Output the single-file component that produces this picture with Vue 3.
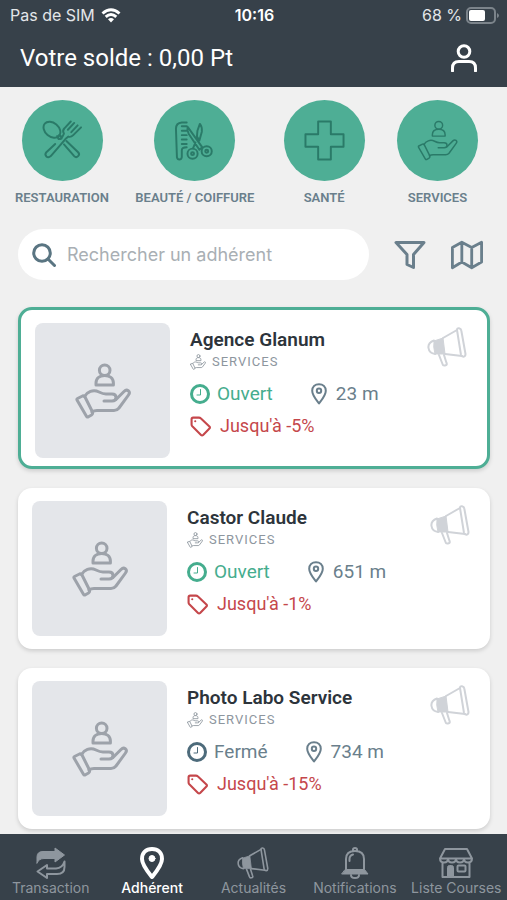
<script setup>
import { ref } from 'vue'

const search = ref('')

const categories = [
  { label: 'RESTAURATION', icon: 'cutlery' },
  { label: 'BEAUTÉ / COIFFURE', icon: 'hair' },
  { label: 'SANTÉ', icon: 'cross' },
  { label: 'SERVICES', icon: 'service' },
]

const members = [
  { name: 'Agence Glanum', open: true, distance: '23 m', offer: "Jusqu'à -5%", featured: true },
  { name: 'Castor Claude', open: true, distance: '651 m', offer: "Jusqu'à -1%", featured: false },
  { name: 'Photo Labo Service', open: false, distance: '734 m', offer: "Jusqu'à -15%", featured: false },
]

const tabs = [
  { label: 'Transaction', icon: 'transfer' },
  { label: 'Adhérent', icon: 'place' },
  { label: 'Actualités', icon: 'megaphone' },
  { label: 'Notifications', icon: 'bell' },
  { label: 'Liste Courses', icon: 'shop' },
]
const activeTab = ref('Adhérent')
</script>

<template>
  <svg class="sprite" aria-hidden="true">
    <symbol id="service" viewBox="0 0 56 56">
      <circle cx="29.7" cy="7.3" r="5.3" />
      <path d="M21 22v-2c0-5 4-7.5 8.7-7.5s8.7 2.5 8.7 7.5v2z" />
      <path d="M2.5 35.5 7.5 33Q9 32.5 10 34L17.5 49Q18 51 16.5 52L13 54Q12 54.3 11.3 53L2 37Q1.6 36 2.5 35.5z" />
      <path d="M9.5 33.5C12 29 18 26 24 29C27 30.500 28 31 31 31H37Q41 31 41 34.5Q41 38 37 38H29" />
      <path d="M41 36.500 49 28.500C52 25.500 56 28.500 53.5 32L44 45Q42 47.5 39 47.5H22Q19 47.5 17 49" />
    </symbol>
    <symbol id="cutlery" viewBox="0 0 42 42">
      <ellipse cx="10.2" cy="10" rx="9.6" ry="7" transform="rotate(40 10.2 10)" />
      <path d="M15.500 16.500l1.5 3 3-.5M17.5 15.500l2.500 1.500v2M22.500 25 33 37q2 2 4 0t0-4L25 21.500" />
      <path d="M29.500 1.500 23 8.500Q20.500 11 22.500 14L21 17 18.500 19.500M13.500 24.500 4.500 33q-2 2.500 0 4.300t4.500-.3L24 19.500l3-2.500q2.500 1 5-1.500l8-8M33 3l-6.500 7M36.500 5.500 30 12.500" />
    </symbol>
    <symbol id="hair" viewBox="0 0 42 42">
      <path d="M13 2.500H8Q2 3 2 9L3 38q.5 2.500 2.500 2.500T8 38V31q0-3 5-3" />
      <path d="M8 6.500h5M8 11h5M8 15.500h5M8 20h5M8 24.500h5" />
      <path d="M14 7 29 28 26 30.500 15 14Q13 10 14 7zM26.500 4Q29 7 28.500 12L26 21 23.500 17 24 11zM22 23l-2.500 6" />
      <circle cx="19" cy="34.500" r="5.200" /><circle cx="33.500" cy="32" r="5.200" />
      <circle cx="19" cy="34.500" r="1.500" /><circle cx="33.500" cy="32" r="1.500" />
    </symbol>
    <symbol id="cross" viewBox="0 0 42 42">
      <path d="M14.500 1.500h13v13h13v13h-13v13h-13v-13h-13v-13h13z" />
    </symbol>
    <symbol id="megaphone" viewBox="0 0 40 40">
      <path d="M7 13.500C3 15 1 18 1.500 21C2 25 4.500 26.500 8 27" />
      <path class="solid" d="M7 14 16 11 18 27H8Q6 20 7 14z" />
      <path d="M16 11 30 3M18 27 35 29" />
      <path d="M30 3Q30 1 32 1.200 34 1.500 34.300 3.500L38.500 27Q38.500 29.500 36.500 29.700 34.500 29.500 34 28z" />
      <path d="M12 28 15.500 37Q16 39 18 38.500 20.500 38 19.500 36L17 28" />
    </symbol>
    <symbol id="transfer" viewBox="0 0 30 32">
      <path class="solid" d="M1 16V10Q1 4.500 7 4.500H19V1L28.500 8 19 15V11.500H8Q3 11.500 1 16z" />
      <path d="M28.500 14.500V20Q28.500 27 21 27H11V31L1.500 24.500 11 18V21.500H20Q26.500 21 28.500 14.500z" />
    </symbol>
    <symbol id="place" viewBox="0 0 24 32">
      <path d="M12 2C6 2 2 6 2 12 2 18 8 25 12 30 16 25 22 18 22 12 22 6 18 2 12 2z" />
      <circle class="dot" cx="12" cy="11.500" r="3" />
    </symbol>
    <symbol id="bell" viewBox="0 0 28 32">
      <path d="M5 22V12Q5 4 14 4T23 12V22M12 4V2.500Q12 1 14 1T16 2.500V4M10 28q0 3 4 3t4-3" />
      <path d="M8.500 14V12Q8.500 8.500 12 7.500" />
      <path class="solid" d="M4.500 22.500H23.500L27 27H1z" />
    </symbol>
    <symbol id="shop" viewBox="0 0 34 31">
      <path d="M6 1.500H28L33 11H1zM1 11q0 4 4 4t4-4q0 4 4 4t4-4q0 4 4 4t4-4q0 4 4 4t4-4M3.500 15V29.500H30.500V15" />
      <path class="solid" d="M8.500 29V20q0-2 2-2h2q2 0 2 2v9z" />
      <rect x="18.500" y="18" width="8" height="6" rx="1" />
    </symbol>
    <symbol id="clock" viewBox="0 0 20 20">
      <circle cx="10" cy="10" r="8.500" />
      <path class="thin" d="M10.500 5.500V11H7" />
    </symbol>
    <symbol id="tag" viewBox="0 0 20 20">
      <path d="M1.500 3Q1.500 1.500 3 1.500H8.500Q9.500 1.500 10.200 2.200L18.500 10Q19.500 11 18.500 12L12.500 18Q11.500 19 10.500 18L2.200 9.800Q1.500 9 1.500 8z" />
      <circle class="dot" cx="5" cy="5" r="0.500" />
    </symbol>
    <symbol id="pin" viewBox="0 0 16 22">
      <path d="M8 1.200C4 1.200 1.200 4 1.200 7.800 1.200 12.500 5.500 17 8 20.500 10.500 17 14.800 12.500 14.800 7.800 14.800 4 12 1.200 8 1.200z" />
      <circle cx="8" cy="7.800" r="2.200" />
    </symbol>
  </svg>

  <div class="app">
    <header class="header">
      <div class="status">
        <span class="carrier">
          Pas de SIM
          <svg class="wifi" viewBox="0 0 20 15" aria-hidden="true">
            <path d="M1.500 5.500Q10-2 18.500 5.500M4.700 8.800Q10 4.200 15.300 8.800" />
            <path class="wifi-base" d="M7 11.300Q10 8.700 13 11.300L10 14.500z" />
          </svg>
        </span>
        <strong class="time">10:16</strong>
        <span class="battery">
          68 %
          <svg class="cell" viewBox="0 0 33 17" aria-hidden="true">
            <rect class="cell-case" x="1" y="1" width="28" height="15" rx="4" />
            <rect class="cell-level" x="3" y="3" width="16" height="11" rx="2" />
            <path class="cell-level cell-tip" d="M31 6q2 1 2 2.500T31 11z" />
          </svg>
        </span>
      </div>
      <div class="balance">
        <h1>Votre solde : 0,00 Pt</h1>
        <button class="icon-button" type="button" aria-label="Profil">
          <svg class="user" viewBox="0 0 26 28" aria-hidden="true">
            <circle cx="13" cy="7.500" r="5.800" />
            <path d="M1.500 27V24Q1.500 17.500 8 17.500H18Q24.500 17.500 24.500 24V27" />
          </svg>
        </button>
      </div>
    </header>

    <main class="content">
      <nav class="categories" aria-label="Catégories">
        <button v-for="c in categories" :key="c.label" class="category" type="button">
          <span class="disc"><svg><use :href="'#' + c.icon" /></svg></span>
          <span>{{ c.label }}</span>
        </button>
      </nav>

      <form class="search" @submit.prevent>
        <label class="field">
          <svg class="loupe" viewBox="0 0 24 24" aria-hidden="true">
            <circle cx="10" cy="10" r="8.300" /><path d="M16 16 22.500 22.500" />
          </svg>
          <input v-model="search" type="search" placeholder="Rechercher un adhérent" aria-label="Rechercher un adhérent" />
        </label>
        <button class="icon-button" type="button" aria-label="Filtrer">
          <svg class="tool" viewBox="0 0 32 30" aria-hidden="true">
            <path d="M2 2.500H30L19.500 14.500V27.500L13 24.500V14.500z" />
          </svg>
        </button>
        <button class="icon-button" type="button" aria-label="Carte">
          <svg class="tool" viewBox="0 0 34 30" aria-hidden="true">
            <path d="M1.500 7 11.500 1.500 22 7 32.500 1.500V22.500L22 28.500 11.500 22.500 1.500 28.500zM11.500 1.500V22.500M22 7V28.500" />
          </svg>
        </button>
      </form>

      <section class="members">
        <article v-for="m in members" :key="m.name" class="card" :class="{ featured: m.featured }">
          <div class="thumb"><svg><use href="#service" /></svg></div>
          <div class="details">
            <h2>{{ m.name }}</h2>
            <p class="kind"><svg><use href="#service" /></svg>SERVICES</p>
            <div class="facts">
              <span class="state" :class="{ open: m.open }">
                <svg><use href="#clock" /></svg>{{ m.open ? 'Ouvert' : 'Fermé' }}
              </span>
              <span class="distance"><svg><use href="#pin" /></svg>{{ m.distance }}</span>
            </div>
            <p class="offer"><svg><use href="#tag" /></svg>{{ m.offer }}</p>
          </div>
          <button class="icon-button news" type="button" aria-label="Actualités">
            <svg><use href="#megaphone" /></svg>
          </button>
        </article>
      </section>
    </main>

    <nav class="tabs" aria-label="Navigation">
      <a
        v-for="t in tabs"
        :key="t.label"
        href="#"
        class="tab"
        :class="{ active: t.label === activeTab }"
        @click.prevent="activeTab = t.label"
      >
        <svg><use :href="'#' + t.icon" /></svg>
        <span>{{ t.label }}</span>
      </a>
    </nav>
  </div>
</template>

<style>
body {
  background: #f0f0f0;
}
</style>

<style scoped>
* {
  box-sizing: border-box;
}
h1,
h2,
p {
  margin: 0;
}
svg {
  display: block;
  flex: none;
  fill: none;
  stroke: currentColor;
  stroke-width: 2;
  stroke-linejoin: round;
  stroke-linecap: round;
}
.solid {
  fill: currentColor;
  stroke-width: 1;
}
.dot {
  fill: currentColor;
  stroke-width: 1;
}
.thin {
  stroke-width: 1;
}
.sprite {
  position: absolute;
  width: 0;
  height: 0;
}
button {
  padding: 0;
  border: 0;
  background: none;
  color: inherit;
  font: inherit;
  cursor: pointer;
}
.icon-button {
  display: flex;
  flex: none;
}
.app {
  display: flex;
  flex-direction: column;
  height: 100vh;
  background: #f0f0f0;
  color: #6a7f8c;
  font-family: Roboto, "Liberation Sans", sans-serif;
}

.header {
  flex: none;
  background: #37414a;
  color: #fff;
}
.status {
  display: grid;
  grid-template-columns: 1fr auto 1fr;
  align-items: center;
  height: 30px;
  padding: 0 8px 0 10px;
  color: #e3e6e9;
  font: 16px/20px Inter, sans-serif;
}
.carrier,
.battery {
  display: flex;
  align-items: center;
  gap: 6px;
}
.battery {
  justify-content: flex-end;
  gap: 4px;
}
.time {
  color: #fff;
  font-weight: 600;
}
.wifi {
  width: 20px;
  height: 15px;
  color: #fff;
  stroke-width: 3;
  stroke-linecap: butt;
}
.wifi-base {
  fill: #fff;
  stroke: none;
}
.cell {
  width: 33px;
  height: 17px;
}
.cell-case {
  stroke: #7c848b;
}
.cell-level {
  fill: #fff;
  stroke: none;
}
.cell-tip {
  fill: #7c848b;
}
.balance {
  display: flex;
  align-items: center;
  justify-content: space-between;
  height: 57px;
  padding: 0 30px 2px 20px;
}
.balance h1 {
  font-size: 24px;
  font-weight: 400;
  line-height: 32px;
}
.user {
  width: 26px;
  height: 28px;
  stroke-width: 3;
}

.content {
  flex: 1;
  min-height: 0;
  overflow: hidden;
}
.categories {
  display: flex;
  justify-content: space-between;
  padding: 13px 26px 0 15px;
}
.category {
  display: flex;
  flex-direction: column;
  align-items: center;
  gap: 8px;
  min-width: 87px;
  font-size: 13px;
  font-weight: 600;
  line-height: 18px;
}
.disc {
  display: flex;
  align-items: center;
  justify-content: center;
  width: 81px;
  height: 81px;
  border-radius: 50%;
  background: #4eae95;
  color: #2a7a68;
}
.disc svg {
  width: 41px;
  height: 41px;
}

.search {
  display: flex;
  align-items: center;
  gap: 25px;
  padding: 22px 24px 0 18px;
}
.field {
  display: flex;
  flex: 1;
  align-items: center;
  gap: 11px;
  min-width: 0;
  height: 51px;
  padding: 0 14px;
  border-radius: 26px;
  background: #fff;
}
.loupe {
  width: 24px;
  height: 24px;
  color: #5a7582;
  stroke-width: 3;
}
.field input {
  flex: 1;
  min-width: 0;
  padding: 0;
  border: 0;
  outline: 0;
  background: none;
  color: #37414a;
  font: 18px/24px Inter, sans-serif;
}
.field input::placeholder {
  color: #a9afb4;
  opacity: 1;
}
.tool {
  width: 32px;
  height: 30px;
  stroke-width: 3;
}

.members {
  display: flex;
  flex-direction: column;
  gap: 19px;
  padding: 27px 17px 20px 18px;
}
.card {
  display: flex;
  padding: 13px 20px 13px 14px;
  border-radius: 14px;
  background: #fff;
  box-shadow: 0 2px 4px rgba(0, 0, 0, 0.15);
}
.card.featured {
  padding-bottom: 8px;
  border: 3px solid #4eae95;
}
.thumb {
  display: flex;
  flex: none;
  align-items: center;
  justify-content: center;
  width: 135px;
  height: 135px;
  border-radius: 8px;
  background: #e4e6ea;
  color: #9da2aa;
}
.thumb svg {
  width: 56px;
  height: 56px;
  stroke-width: 3;
}
.details {
  flex: 1;
  min-width: 0;
  padding: 5px 0 0 20px;
}
.details h2 {
  color: #2d343b;
  font-size: 19px;
  font-weight: 600;
  line-height: 24px;
}
.kind {
  display: flex;
  align-items: center;
  gap: 6px;
  color: #8d969e;
  font-size: 13px;
  line-height: 20px;
  letter-spacing: 1px;
}
.kind svg {
  width: 16px;
  height: 16px;
  stroke-width: 3;
}
.facts {
  display: flex;
  gap: 38px;
  padding-top: 10px;
  font-size: 19px;
  line-height: 24px;
}
.state,
.distance,
.offer {
  display: flex;
  align-items: center;
  gap: 7px;
}
.state svg {
  width: 20px;
  height: 20px;
  color: #4d6b7b;
  stroke-width: 3;
}
.state.open,
.state.open svg {
  color: #45ad8e;
}
.distance {
  gap: 9px;
}
.distance svg {
  width: 16px;
  height: 22px;
}
.offer {
  gap: 9px;
  padding-top: 8px;
  color: #c5474b;
  font-size: 18px;
  line-height: 24px;
}
.offer svg {
  width: 21px;
  height: 21px;
}
.news {
  align-self: flex-start;
  padding-top: 4px;
  color: #d0d3d8;
}
.news svg {
  width: 40px;
  height: 40px;
}

.tabs {
  display: grid;
  flex: none;
  grid-template-columns: repeat(5, 1fr);
  height: 66px;
  padding-top: 13px;
  background: #37414a;
  color: #8e969e;
  font: 14px/18px Inter, sans-serif;
}
.tab {
  display: flex;
  flex-direction: column;
  align-items: center;
  color: inherit;
  text-decoration: none;
  white-space: nowrap;
}
.tab svg {
  width: 34px;
  height: 32px;
}
.tab.active {
  color: #fff;
  font-weight: 500;
}
.tab.active svg {
  stroke-width: 4;
}
</style>
